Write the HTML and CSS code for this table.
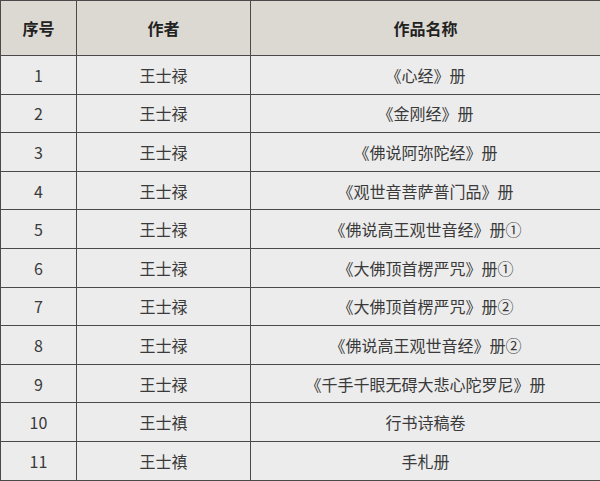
FILE: index.html
```html
<!DOCTYPE html>
<html lang="zh">
<head>
<meta charset="utf-8">
<link rel="stylesheet" href="styles.css">
</head>
<body>
<table class="works">
  <colgroup>
    <col class="c-no">
    <col class="c-author">
    <col class="c-title">
  </colgroup>
  <thead>
    <tr><th>序号</th><th>作者</th><th>作品名称</th></tr>
  </thead>
  <tbody>
    <tr><td>1</td><td>王士禄</td><td>《心经》册</td></tr>
    <tr><td>2</td><td>王士禄</td><td>《金刚经》册</td></tr>
    <tr><td>3</td><td>王士禄</td><td>《佛说阿弥陀经》册</td></tr>
    <tr><td>4</td><td>王士禄</td><td>《观世音菩萨普门品》册</td></tr>
    <tr><td>5</td><td>王士禄</td><td>《佛说高王观世音经》册①</td></tr>
    <tr><td>6</td><td>王士禄</td><td>《大佛顶首楞严咒》册①</td></tr>
    <tr><td>7</td><td>王士禄</td><td>《大佛顶首楞严咒》册②</td></tr>
    <tr><td>8</td><td>王士禄</td><td>《佛说高王观世音经》册②</td></tr>
    <tr><td>9</td><td>王士禄</td><td>《千手千眼无碍大悲心陀罗尼》册</td></tr>
    <tr><td>10</td><td>王士禛</td><td>行书诗稿卷</td></tr>
    <tr><td>11</td><td>王士禛</td><td>手札册</td></tr>
  </tbody>
</table>
</body>
</html>
```

FILE: styles.css
```css
html, body {
  margin: 0;
  padding: 0;
  background: #ececec;
}
body {
  font-family: "Noto Sans CJK SC", "Noto Sans", sans-serif;
  color: #3a3a3a;
}
.works {
  width: 600px;
  border-collapse: collapse;
  table-layout: fixed;
  background: #ececec;
}
.c-no { width: 76px; }
.c-author { width: 174px; }
.c-title { width: 350px; }
.works th,
.works td {
  border: 1px solid #4a4a4a;
  text-align: center;
  padding: 0;
  font-size: 16px;
  line-height: 20px;
}
.works thead tr {
  height: 55px;
}
.works th {
  background: #dcd9d2;
  color: #222;
  font-weight: 700;
}
.works tbody tr {
  height: 38.6px;
}
```
